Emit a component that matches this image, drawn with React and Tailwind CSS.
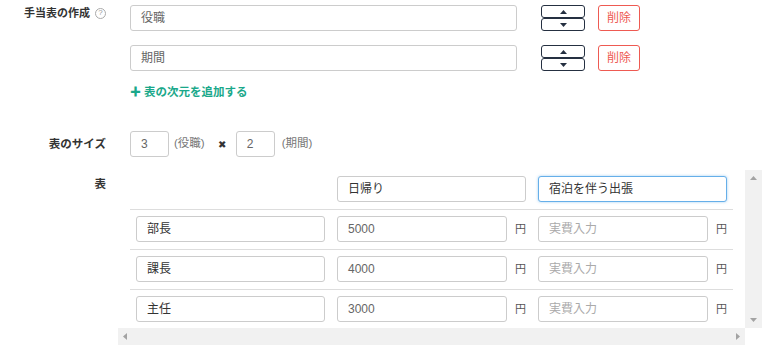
import React from "react";

const FONT = { fontFamily: '"Liberation Sans", "Noto Sans CJK JP", sans-serif' };

function TextInput({ value, placeholder, width, focus, dark }) {
    return (
        <div
            className={
                "h-[26px] flex items-center px-[10px] rounded-[3px] border bg-white text-[12px] " +
                (focus ? "border-[#66afe9] shadow-[0_0_3px_rgba(102,175,233,0.6)] " : "border-[#cccccc] ") +
                (value ? (dark ? "text-[#333333]" : "text-[#666666]") : "text-[#aaaaaa]")
            }
            style={{ width }}
        >
            {value || placeholder}
        </div>
    );
}

function Caret({ up }) {
    return (
        <svg width="7" height="4" viewBox="0 0 7 4">
            {up ? <path d="M0 4 L3.5 0 L7 4 Z" fill="#253041" /> : <path d="M0 0 L3.5 4 L7 0 Z" fill="#253041" />}
        </svg>
    );
}

function UpDown() {
    return (
        <div className="flex flex-col w-[44px]">
            <div className="h-[13px] border-[1.5px] border-[#253041] rounded-[3px] flex items-center justify-center">
                <Caret up />
            </div>
            <div className="h-[13px] border-[1.5px] border-[#253041] rounded-[3px] flex items-center justify-center">
                <Caret />
            </div>
        </div>
    );
}

function DimRow({ value }) {
    return (
        <div className="flex items-center h-[26px]">
            <TextInput value={value} width={387} />
            <div className="ml-[24px]">
                <UpDown />
            </div>
            <div className="ml-[13px] w-[42px] h-[26px] rounded-[3px] border border-[#ee5a52] text-[#ee5a52] text-[12px] flex items-center justify-center">
                削除
            </div>
        </div>
    );
}

function Label({ children, className = "" }) {
    return (
        <div className={"w-[106px] shrink-0 text-right text-[11.5px] font-bold text-[#333333] leading-[14px] " + className}>
            {children}
        </div>
    );
}

function Tri({ dir }) {
    const d = {
        up: "M0 4 L3.5 0 L7 4 Z",
        down: "M0 0 L3.5 4 L7 0 Z",
        left: "M4 0 L0 3.5 L4 7 Z",
        right: "M0 0 L4 3.5 L0 7 Z",
    }[dir];
    const vert = dir === "up" || dir === "down";
    return (
        <svg width={vert ? 7 : 4} height={vert ? 4 : 7} viewBox={vert ? "0 0 7 4" : "0 0 4 7"}>
            <path d={d} fill="#a3a3a3" />
        </svg>
    );
}

const rows = [
    { name: "部長", day: "5000" },
    { name: "課長", day: "4000" },
    { name: "主任", day: "3000" },
];

function AmountCell({ value, placeholder }) {
    return (
        <div className="w-[201px] shrink-0 px-[6px] flex items-center">
            <TextInput value={value} placeholder={placeholder} width={172} />
            <span className="ml-[8px] text-[11px] text-[#555555]">円</span>
        </div>
    );
}

function AllowanceTable() {
    return (
        <div className="ml-[-12px] w-[644px] h-[175px] flex flex-col">
            <div className="flex h-[158px]">
                <div className="w-[627px] overflow-hidden pl-[12px]">
                    <div className="w-[603px]">
                        <div className="flex border-b border-[#dddddd] pt-[6px] pb-[7px]">
                            <div className="w-[201px] shrink-0" />
                            <div className="w-[201px] shrink-0 px-[6px]">
                                <TextInput value="日帰り" width={189} dark />
                            </div>
                            <div className="w-[201px] shrink-0 px-[6px]">
                                <TextInput value="宿泊を伴う出張" width={189} dark focus />
                            </div>
                        </div>
                        {rows.map((r) => (
                            <div key={r.name} className="flex border-b border-[#dddddd] pt-[6px] pb-[7px]">
                                <div className="w-[201px] shrink-0 px-[6px]">
                                    <TextInput value={r.name} width={189} dark />
                                </div>
                                <AmountCell value={r.day} />
                                <AmountCell placeholder="実費入力" />
                            </div>
                        ))}
                    </div>
                </div>
                <div className="w-[17px] bg-[#f1f1f1] flex flex-col items-center justify-between py-[6px]">
                    <Tri dir="up" />
                    <Tri dir="down" />
                </div>
            </div>
            <div className="flex h-[17px]">
                <div className="w-[627px] bg-[#f1f1f1] flex items-center justify-between px-[5px]">
                    <Tri dir="left" />
                    <Tri dir="right" />
                </div>
                <div className="w-[17px] bg-white" />
            </div>
        </div>
    );
}

export default function App() {
    return (
        <div className="w-[773px] h-[357px] bg-white overflow-hidden pt-[5px]" style={FONT}>
            <div className="flex items-start">
                <Label className="flex items-center justify-end pt-[1px]">
                    <span className="text-[11px]">手当表の作成</span>
                    <span className="ml-[5px] w-[11px] h-[11px] rounded-full border border-[#aaaaaa] text-[#999999] text-[8px] font-normal leading-none flex items-center justify-center">
                        ?
                    </span>
                </Label>
                <div className="ml-[24px] flex flex-col">
                    <DimRow value="役職" />
                    <div className="mt-[14px]">
                        <DimRow value="期間" />
                    </div>
                    <div className="mt-[14px] flex items-center text-[11.5px] font-bold text-[#1aa88a] leading-[14px]">
                        <span className="text-[11px] mr-[3px]">✚</span>
                        表の次元を追加する
                    </div>
                </div>
            </div>

            <div className="flex items-center mt-[32px]">
                <Label>表のサイズ</Label>
                <div className="ml-[24px] flex items-center text-[11.5px] text-[#777777]">
                    <TextInput value="3" width={39} />
                    <span className="ml-[5px]">(役職)</span>
                    <span className="ml-[13px] text-[10px] text-[#333333]">✖</span>
                    <div className="ml-[10px]">
                        <TextInput value="2" width={39} />
                    </div>
                    <span className="ml-[7px]">(期間)</span>
                </div>
            </div>

            <div className="flex mt-[13px]">
                <Label className="pt-[7px]">表</Label>
                <div className="ml-[24px]">
                    <AllowanceTable />
                </div>
            </div>
        </div>
    );
}
